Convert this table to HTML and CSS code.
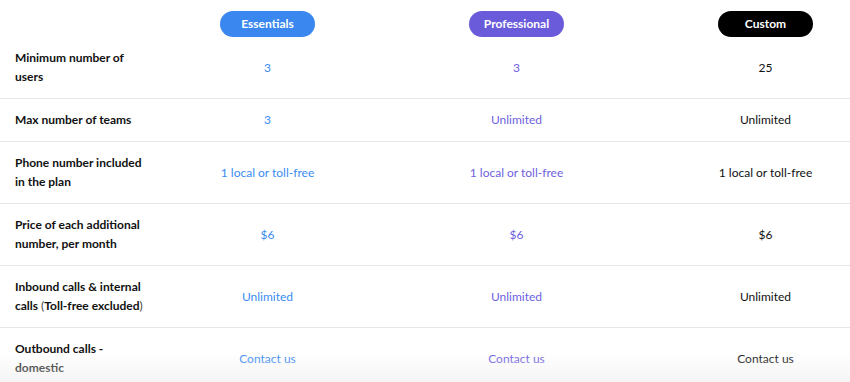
FILE: index.html
```html
<!DOCTYPE html>
<html lang="en">
<head>
<meta charset="utf-8">
<title>Plan comparison</title>
<link rel="stylesheet" href="styles.css">
</head>
<body>
<div class="table">
  <div class="row head">
    <div class="label"></div>
    <div class="cell"><span class="pill blue">Essentials</span></div>
    <div class="cell"><span class="pill purple">Professional</span></div>
    <div class="cell"><span class="pill black">Custom</span></div>
  </div>
  <div class="row first">
    <div class="label">Minimum number of<br>users</div>
    <div class="cell t-blue">3</div>
    <div class="cell t-purple">3</div>
    <div class="cell t-black">25</div>
  </div>
  <div class="row">
    <div class="label">Max number of teams</div>
    <div class="cell t-blue">3</div>
    <div class="cell t-purple">Unlimited</div>
    <div class="cell t-black">Unlimited</div>
  </div>
  <div class="row">
    <div class="label">Phone number included<br>in the plan</div>
    <div class="cell t-blue">1 local or toll-free</div>
    <div class="cell t-purple">1 local or toll-free</div>
    <div class="cell t-black">1 local or toll-free</div>
  </div>
  <div class="row">
    <div class="label">Price of each additional<br>number, per month</div>
    <div class="cell t-blue">$6</div>
    <div class="cell t-purple">$6</div>
    <div class="cell t-black">$6</div>
  </div>
  <div class="row">
    <div class="label">Inbound calls &amp; internal<br>calls <span class="paren">(</span>Toll-free excluded<span class="paren">)</span></div>
    <div class="cell t-blue">Unlimited</div>
    <div class="cell t-purple">Unlimited</div>
    <div class="cell t-black">Unlimited</div>
  </div>
  <div class="row last">
    <div class="label">Outbound calls -<br>domestic</div>
    <div class="cell t-blue">Contact us</div>
    <div class="cell t-purple">Contact us</div>
    <div class="cell t-black">Contact us</div>
  </div>
</div>
<div class="fade"></div>
</body>
</html>
```
FILE: styles.css
```css
html, body {
  margin: 0;
  padding: 0;
  background: #ffffff;
  overflow: hidden;
}
body {
  font-family: "Lato", "Liberation Sans", sans-serif;
  color: #111111;
  width: 850px;
  height: 382px;
}
.table {
  display: flex;
  flex-direction: column;
}
.row {
  display: grid;
  grid-template-columns: 143px 249px 249px 249px;
  align-items: center;
  border-bottom: 1px solid #e6e6e6;
  padding: 11px 0 12px;
  min-height: 19px;
}
.row.head {
  border-bottom: none;
  padding: 11px 0 0;
  height: 26px;
}
.row.first {
  padding-top: 11px;
}
.row.last {
  border-bottom: none;
}
.label {
  padding-left: 15px;
  font-size: 12px;
  font-weight: 700;
  line-height: 19px;
  color: #111111;
  white-space: nowrap;
}
.paren {
  font-weight: 400;
  color: #444;
}
.cell {
  text-align: center;
  font-size: 12px;
  line-height: 19px;
}
.pill {
  display: inline-block;
  width: 95px;
  height: 26px;
  line-height: 26px;
  border-radius: 13px;
  color: #fff;
  font-weight: 700;
  font-size: 12px;
  text-align: center;
}
.blue { background: #3a88ef; }
.purple { background: #6a5bdb; }
.black { background: #000; }
.t-blue { color: #3b8cf2; }
.t-purple { color: #6e5fe0; }
.t-black { color: #111; }
.fade {
  position: fixed;
  left: 0;
  right: 0;
  bottom: 0;
  height: 30px;
  background: linear-gradient(to bottom, rgba(240,240,240,0), rgba(238,238,238,0.6));
  pointer-events: none;
}
```
